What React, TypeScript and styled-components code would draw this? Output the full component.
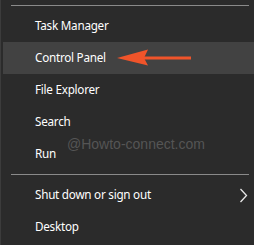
import React from "react";
import styled, { createGlobalStyle } from "styled-components";

const Global = createGlobalStyle`
  html, body { margin: 0; padding: 0; background: #2b2b2b; }
  body { font-family: "Noto Sans", "Open Sans", sans-serif; }
`;

const Menu = styled.div`
  position: relative;
  width: 254px;
  height: 245px;
  box-sizing: border-box;
  background: #2b2b2b;
  border-left: 1px solid #3c3c3c;
  padding: 5px 0 0 2px;
  overflow: hidden;
`;

const Separator = styled.div<{ $top?: number }>`
  height: 1px;
  background: #8a8a8a;
  margin: ${(p) => p.$top ?? 0}px 5px 4px 8px;
`;

const Row = styled.div<{ $active?: boolean }>`
  height: 32px;
  display: flex;
  align-items: center;
  justify-content: space-between;
  padding: 0 6px 0 32px;
  background: ${(p) => (p.$active ? "#424242" : "transparent")};
  color: #ffffff;
  font-family: "Noto Sans", "Open Sans", sans-serif;
  font-size: 11.7px;
  letter-spacing: -0.25px;
`;

const Label = styled.span`
  line-height: 1;
`;

const Chevron = styled.svg`
  width: 9px;
  height: 15px;
  display: block;
`;

const Watermark = styled.div`
  position: absolute;
  left: 66px;
  top: 136px;
  font-family: "Liberation Sans", Arial, sans-serif;
  font-size: 14px;
  color: #555555;
  pointer-events: none;
`;

const Pointer = styled.svg`
  position: absolute;
  left: 115px;
  top: 48px;
  width: 78px;
  height: 20px;
`;

export default function App() {
  return (
    <>
      <Global />
      <Menu>
        <Separator />
        <Row><Label>Task Manager</Label></Row>
        <Row $active><Label>Control Panel</Label></Row>
        <Row><Label>File Explorer</Label></Row>
        <Row><Label>Search</Label></Row>
        <Row><Label>Run</Label></Row>
        <Separator $top={4} />
        <Row>
          <Label>Shut down or sign out</Label>
          <Chevron viewBox="0 0 9 15">
            <path d="M1.5 1 L7.5 7.5 L1.5 14" fill="none" stroke="#e8e8e8" strokeWidth="1.3" />
          </Chevron>
        </Row>
        <Row><Label>Desktop</Label></Row>
        <Watermark>@Howto-connect.com</Watermark>
        <Pointer viewBox="0 0 78 20">
          <path d="M1 10 L32 1.5 L28 10 L32 17.5 Z" fill="#f0542a" />
          <rect x="28" y="8.5" width="47" height="3" fill="#f0542a" />
        </Pointer>
      </Menu>
    </>
  );
}
